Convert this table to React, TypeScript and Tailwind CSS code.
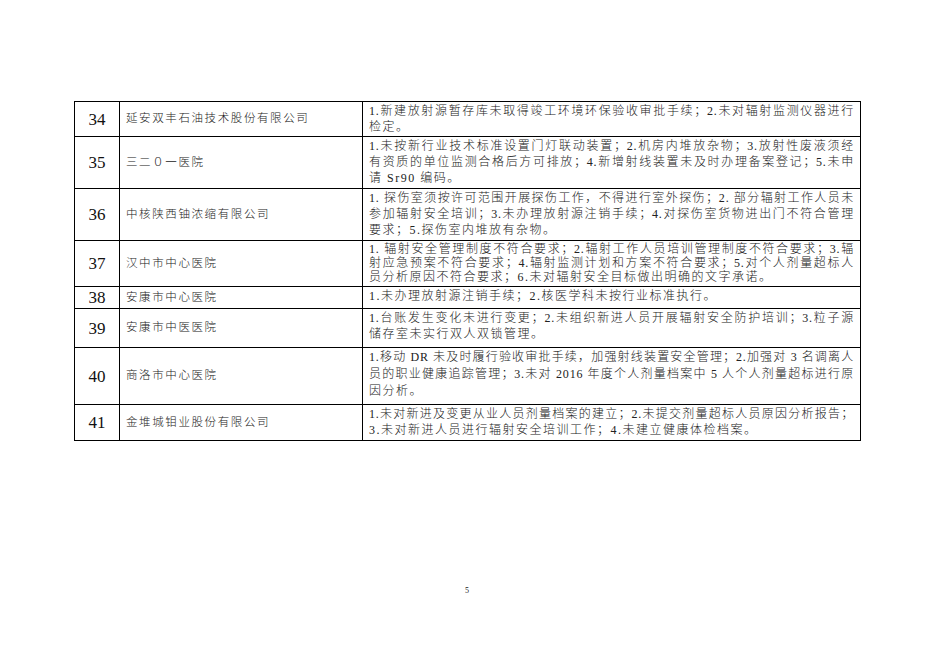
import React from "react";

type Row = { no: string; name: string; lines: string[]; h: number; lh: number };

const rows: Row[] = [
  {
    no: "34",
    name: "延安双丰石油技术股份有限公司",
    h: 35,
    lh: 16,
    lines: ["1.新建放射源暂存库未取得竣工环境环保验收审批手续；2.未对辐射监测仪器进行", "检定。"],
  },
  {
    no: "35",
    name: "三二０一医院",
    h: 52,
    lh: 16,
    lines: [
      "1.未按新行业技术标准设置门灯联动装置；2.机房内堆放杂物；3.放射性废液须经",
      "有资质的单位监测合格后方可排放；4.新增射线装置未及时办理备案登记；5.未申",
      "请 Sr90 编码。",
    ],
  },
  {
    no: "36",
    name: "中核陕西铀浓缩有限公司",
    h: 52,
    lh: 16,
    lines: [
      "1. 探伤室须按许可范围开展探伤工作，不得进行室外探伤；2. 部分辐射工作人员未",
      "参加辐射安全培训；3.未办理放射源注销手续；4.对探伤室货物进出门不符合管理",
      "要求；5.探伤室内堆放有杂物。",
    ],
  },
  {
    no: "37",
    name: "汉中市中心医院",
    h: 46,
    lh: 14,
    lines: [
      "1. 辐射安全管理制度不符合要求；2.辐射工作人员培训管理制度不符合要求；3.辐",
      "射应急预案不符合要求；4.辐射监测计划和方案不符合要求；5.对个人剂量超标人",
      "员分析原因不符合要求；6.未对辐射安全目标做出明确的文字承诺。",
    ],
  },
  {
    no: "38",
    name: "安康市中心医院",
    h: 22,
    lh: 16,
    lines: ["1.未办理放射源注销手续；2.核医学科未按行业标准执行。"],
  },
  {
    no: "39",
    name: "安康市中医医院",
    h: 39,
    lh: 16,
    lines: [
      "1.台账发生变化未进行变更；2.未组织新进人员开展辐射安全防护培训；3.粒子源",
      "储存室未实行双人双锁管理。",
    ],
  },
  {
    no: "40",
    name: "商洛市中心医院",
    h: 57,
    lh: 17,
    lines: [
      "1.移动 DR 未及时履行验收审批手续，加强射线装置安全管理；2.加强对 3 名调离人",
      "员的职业健康追踪管理；3.未对 2016 年度个人剂量档案中 5 人个人剂量超标进行原",
      "因分析。",
    ],
  },
  {
    no: "41",
    name: "金堆城钼业股份有限公司",
    h: 36,
    lh: 16,
    lines: [
      "1.未对新进及变更从业人员剂量档案的建立；2.未提交剂量超标人员原因分析报告；",
      "3.未对新进人员进行辐射安全培训工作；4.未建立健康体检档案。",
    ],
  },
];

export default function App() {
  return (
    <div
      className="w-[936px] h-[662px] bg-white relative overflow-hidden text-[#222]"
      style={{ fontFamily: '"Liberation Serif", "Noto Sans CJK SC", serif' }}
    >
      <div className="pt-[101px] pl-[74px]">
        <table className="table-fixed border-collapse w-[786px] border border-black">
          <colgroup>
            <col className="w-[45px]" />
            <col className="w-[243px]" />
            <col className="w-[498px]" />
          </colgroup>
          <tbody>
            {rows.map((r) => (
              <tr key={r.no} style={{ height: r.h }}>
                <td className="border border-black text-center align-middle text-[17px] leading-none p-0 text-[#111]">
                  {r.no}
                </td>
                <td className="border border-black align-middle pl-[6px] text-[11.5px] tracking-[1.6px] font-light leading-none">
                  {r.name}
                </td>
                <td className="border border-black align-top pl-[6px] pr-[6px] pt-[1px] text-[12px] font-light tracking-[1.5px]">
                  {r.lines.map((l, i) => (
                    <div
                      key={i}
                      style={{ lineHeight: `${r.lh}px` }}
                      className={
                        i < r.lines.length - 1
                          ? "text-justify [text-align-last:justify] whitespace-nowrap tracking-[0.8px]"
                          : "text-left whitespace-nowrap"
                      }
                    >
                      {l}
                    </div>
                  ))}
                </td>
              </tr>
            ))}
          </tbody>
        </table>
      </div>
      <div className="absolute left-[465px] top-[587px] text-[8px] leading-none">5</div>
    </div>
  );
}
